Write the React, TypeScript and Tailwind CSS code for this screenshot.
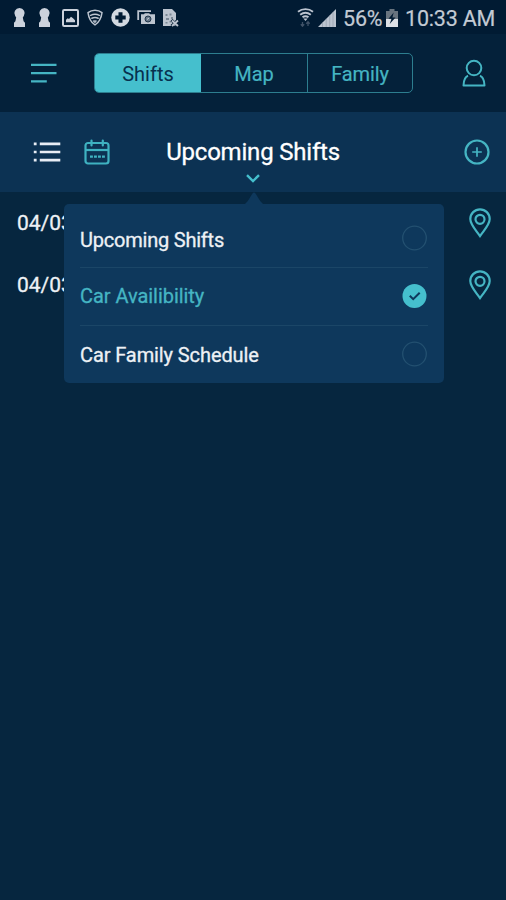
import React from 'react';

const font = 'font-[Roboto,"Noto_Sans",sans-serif]';

const KeyholeIcon = () => (
  <svg width="13" height="19" viewBox="0 0 13 19" fill="#ccd2dc">
    <path d="M6.500 0a5.200 5.200 0 0 1 4.300 8.100L9.800 9.500l.8 3.800 1.400 1.500V19H1v-4.200l1.400-1.500.8-3.800-1-1.400A5.200 5.200 0 0 1 6.500 0z" />
  </svg>
);

const PictureIcon = () => (
  <svg width="17" height="18" viewBox="0 0 17 18" fill="none">
    <rect x="1" y="1" width="15" height="16" rx="1.200" stroke="#ccd2dc" strokeWidth="2" />
    <path d="M4 13.300v-2.500l1.700-1.500L7 10l2-2.300 2 1.500 2 2.100v2z" fill="#ccd2dc" />
  </svg>
);

const WifiShieldIcon = () => (
  <svg width="16" height="17" viewBox="0 0 16 17" fill="none" stroke="#bcc4cf" strokeLinecap="round" strokeLinejoin="round">
    <path d="M1 3.600C5 .4 11 .4 15 3.600 14.300 9 12 13.300 8 16 4 13.300 1.700 9 1 3.600z" strokeWidth="1.500" />
    <path d="M3.600 6.300c3-1.500 5.800-1.500 8.800 0M4.800 9.300c2.200-1 4.200-1 6.400 0" strokeWidth="1.500" />
    <path d="M6.500 11.800h3L8 13.800z" fill="#bcc4cf" strokeWidth=".8" />
  </svg>
);

const PlusBadgeIcon = () => (
  <svg width="19" height="19" viewBox="0 0 19 19">
    <circle cx="9.500" cy="9.500" r="9.200" fill="#d3d9e1" />
    <path d="M9.500 4.300v10.400M4.300 9.500h10.400" stroke="#011b33" strokeWidth="4" />
  </svg>
);

const CameraStackIcon = () => (
  <svg width="18" height="15" viewBox="0 0 18 15" fill="none">
    <path d="M1.200 10V1.200H14" stroke="#bcc4cf" strokeWidth="1.800" />
    <path d="M4 4.300h3l.8-1h4.400l.8 1H18V14H4z" fill="#bcc4cf" />
    <circle cx="11" cy="9" r="3" fill="#67788a" stroke="#22384d" />
    <path d="M10 9.500l2-1.500" stroke="#ccd2dc" />
  </svg>
);

const FileIcon = () => (
  <svg width="17" height="18" viewBox="0 0 17 18">
    <path d="M1 0h9l4 4v13H1z" fill="#bcc4cf" />
    <path d="M3.500 5h2v2h-2zM7.500 4.500h2v2h-2zM4 9h3v2H4zM9 8h2v2H9zM3.500 13h2v1.500h-2zM7.500 12h2v1.500h-2z" fill="#7a8795" />
    <path d="M9.500 11l6.500 6M16 11l-6.500 6" stroke="#011b33" strokeWidth="3" />
    <path d="M10 11.500l6 5.500M16 11.500L10 17" stroke="#bcc4cf" strokeWidth="1.900" />
  </svg>
);

const WifiIcon = () => (
  <svg width="17" height="19" viewBox="0 0 17 19" fill="none">
    <path d="M1 3.800C5.400.2 11.600.2 16 3.800M3.200 6.800c3.200-2.600 7.400-2.600 10.600 0M5.500 9.300c1.900-1.400 4.100-1.400 6 0" stroke="#bcc4cf" strokeWidth="1.900" />
    <path d="M6.300 10.500h4.400L8.500 13z" fill="#bcc4cf" />
    <path d="M5.500 14v4M3.800 16.300l1.700 1.900 1.700-1.900M11 18v-4M9.300 15.700L11 13.800l1.700 1.900" stroke="#405267" strokeWidth="1.300" />
  </svg>
);

const SignalIcon = () => (
  <svg width="18" height="18" viewBox="0 0 18 18">
    <path d="M0 18L18 0v18z" fill="#bcc4cf" />
    <path d="M4.500 13.500V18M8.200 9.800V18M11.700 6.300V18M15 3v15" stroke="#8d99a6" strokeWidth=".6" />
  </svg>
);

const BatteryIcon = () => (
  <svg width="12" height="18" viewBox="0 0 12 18">
    <path d="M3.500 0h5v2H12v16H0V2h3.500z" fill="#68747f" />
    <path d="M0 10h12v8H0z" fill="#dde1e6" />
    <path d="M7.700 3.500L2.500 9.700h3L3.700 15l5.800-6.500H6.400z" fill="#011b33" />
  </svg>
);

const MenuIcon = () => (
  <svg width="27" height="20" viewBox="0 0 27 20" stroke="#45b5c3" strokeWidth="2.200">
    <path d="M0 1.800h25.500M0 10.100h25.500M0 18.300h15.800" />
  </svg>
);

const UserIcon = () => (
  <svg width="24" height="29" viewBox="0 0 24 29" fill="none" stroke="#45b5c3" strokeWidth="2" strokeLinejoin="round">
    <circle cx="12" cy="9" r="7.300" />
    <path d="M6 16.800c-3.300 1.300-4.300 3.800-4.500 9.700h21c-.2-5.900-1.200-8.400-4.500-9.700" />
  </svg>
);

const ListIcon = () => (
  <svg width="28" height="22" viewBox="0 0 28 22" stroke="#e8edf5" strokeWidth="2.700">
    <path d="M.800 2.800h2.800M.800 11h2.800M.800 19.200h2.800M6.800 2.800h20.500M6.800 11h20.500M6.800 19.200h20.500" />
  </svg>
);

const CalendarIcon = () => (
  <svg width="26" height="26" viewBox="0 0 26 26" fill="none" stroke="#3fb2c1" strokeWidth="2.200">
    <rect x="1.500" y="4" width="23" height="20.500" rx="2.500" />
    <path d="M2 11h22.500" />
    <path d="M7.500 1.500v5M18.800 1.500v5" strokeLinecap="round" />
    <path d="M6 17.700h15" strokeDasharray="2.900 1.100" />
  </svg>
);

const ChevronIcon = () => (
  <svg width="14" height="9" viewBox="0 0 14 9" fill="none" stroke="#45bfcd" strokeWidth="2.400">
    <path d="M1 1.200L7 7l6-5.800" />
  </svg>
);

const AddIcon = () => (
  <svg width="26" height="26" viewBox="0 0 26 26" fill="none" stroke="#45b5c3">
    <circle cx="13" cy="13" r="11.500" strokeWidth="2.200" />
    <path d="M13 8.200v9.600M8.200 13h9.600" strokeWidth="1.700" />
  </svg>
);

const PinIcon = () => (
  <svg width="22" height="30" viewBox="0 0 22 30" fill="none" stroke="#45b5c3" strokeWidth="2.200">
    <path d="M11 28C6 21 1.300 16.500 1.300 11a9.700 9.700 0 0 1 19.400 0c0 5.500-4.700 10-9.700 17z" />
    <circle cx="11" cy="11.300" r="4.500" />
  </svg>
);

const Radio = ({ checked }: { checked: boolean }) => (
  <svg width="26" height="26" viewBox="0 0 26 26" fill="none">
    {checked ? (
      <>
        <circle cx="12.500" cy="13" r="12" fill="#45bfcd" />
        <path d="M7.800 12.700l3.400 3.500 6.500-6.500" stroke="#0e385c" strokeWidth="2" />
      </>
    ) : (
      <circle cx="12.500" cy="13" r="11.800" stroke="#235070" strokeWidth="1.300" />
    )}
  </svg>
);

const options = [
  { label: 'Upcoming Shifts', checked: false, row: 'h-[63px] pt-1', text: 'pt-1 tracking-[-0.22px]' },
  { label: 'Car Availibility', checked: true, row: 'h-[58px] border-t border-[#1b4667] pb-0.5', text: 'tracking-[-0.05px]' },
  { label: 'Car Family Schedule', checked: false, row: 'h-[58px] border-t border-[#1b4667] pb-0.5', text: 'pt-[3px] tracking-[-0.1px]' },
];

const shifts = ['04/03', '04/03'];

const App: React.FC = () => {
  return (
    <div className={`relative h-[900px] w-[506px] overflow-hidden bg-[#06263f] ${font}`}>
      {/* Status bar */}
      <div className="flex h-[34px] items-center bg-[#011b33] pl-[13px] pr-[11px] pt-px text-[21.500px] text-[#c3cad3] [-webkit-text-stroke:0.2px]">
        <div className="flex items-center">
          <KeyholeIcon />
          <span className="ml-3"><KeyholeIcon /></span>
          <span className="ml-[11px]"><PictureIcon /></span>
          <span className="ml-2"><WifiShieldIcon /></span>
          <span className="ml-2"><PlusBadgeIcon /></span>
          <span className="ml-[7px]"><CameraStackIcon /></span>
          <span className="ml-[7px]"><FileIcon /></span>
        </div>
        <div className="ml-auto flex items-center whitespace-nowrap">
          <WifiIcon />
          <span className="ml-1"><SignalIcon /></span>
          <span className="ml-[7px] w-[39px] pt-[3px] tracking-[-0.2px]">56%</span>
          <span className="ml-1"><BatteryIcon /></span>
          <span className="ml-[7px] w-[90px] pt-[3px] tracking-[-0.2px]">10:33 AM</span>
        </div>
      </div>

      {/* Header */}
      <header className="flex h-[78px] items-center bg-[#04213a] pl-[31px] pr-5">
        <MenuIcon />
        <div className="ml-9 flex h-10 w-[319px] overflow-hidden rounded-[5px] border border-[#2d7e8f] text-[20px] text-[#45b5c3]">
          <button className="w-[106px] bg-[#45bfcd] pt-0.5 text-[#07304f]">Shifts</button>
          <button className="w-[106px] pt-0.5 [-webkit-text-stroke:0.2px]">Map</button>
          <button className="flex-1 border-l border-[#2d7e8f] pt-0.5 tracking-[-0.1px] [-webkit-text-stroke:0.2px]">Family</button>
        </div>
        <button className="ml-auto"><UserIcon /></button>
      </header>

      {/* Toolbar */}
      <div className="flex h-20 items-center bg-[#0c3253] pl-[33px] pr-4">
        <ListIcon />
        <span className="ml-[23px]"><CalendarIcon /></span>
        <div className="ml-14 flex w-[174px] flex-col items-center whitespace-nowrap pt-4">
          <h1 className="text-[24px] leading-7 tracking-[-0.2px] text-white [-webkit-text-stroke:0.3px]">Upcoming Shifts</h1>
          <span className="mt-2"><ChevronIcon /></span>
        </div>
        <span className="ml-auto"><AddIcon /></span>
      </div>

      {/* Shift rows */}
      {shifts.map((date, index) => (
        <div key={index} className="flex h-[62px] items-center justify-between pl-[17px] pr-[15px] text-[21px] text-[#edf1f5] [-webkit-text-stroke:0.3px]">
          <span className="pt-0.5">{date}</span>
          <PinIcon />
        </div>
      ))}

      {/* View picker */}
      <div className="absolute left-[64px] top-[192px] w-[380px]">
        <svg className="ml-[181px] block" width="18" height="12" viewBox="0 0 18 12">
          <path d="M0 12C3 9.500 5.500 4.500 7.500 1.500Q9-.5 10.500 1.500C12.500 4.500 15 9.500 18 12z" fill="#0e385c" />
        </svg>
        <div className="h-[179px] rounded-[5px] bg-[#0e385c] px-4 text-[20px] text-[#edf1f5] [-webkit-text-stroke:0.3px]">
          {options.map((option) => (
            <div key={option.label} className={`flex items-center justify-between ${option.row}`}>
              <span className={`${option.text} ${option.checked ? 'text-[#45b5c3]' : ''}`}>
                {option.label}
              </span>
              <Radio checked={option.checked} />
            </div>
          ))}
        </div>
      </div>
    </div>
  );
};

export default App;
